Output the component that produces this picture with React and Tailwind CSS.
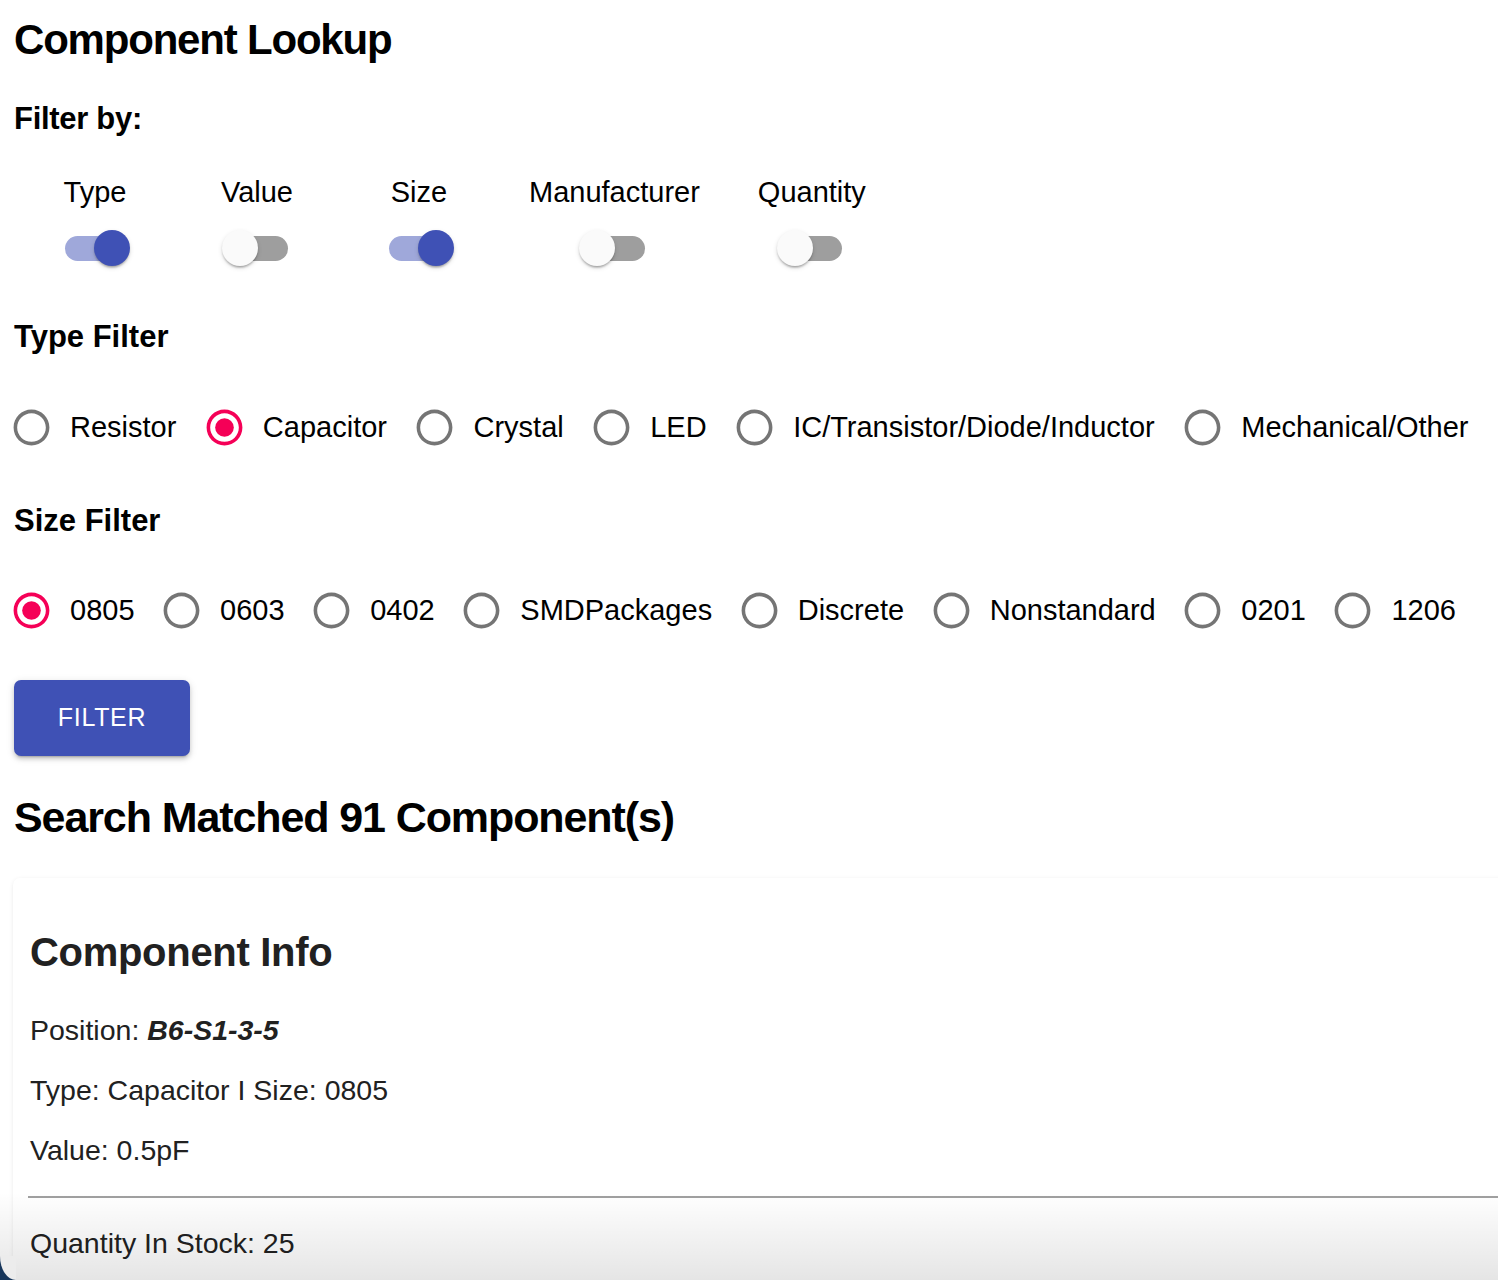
import React from "react";

const toggles = [
  { label: "Type", on: true },
  { label: "Value", on: false },
  { label: "Size", on: true },
  { label: "Manufacturer", on: false },
  { label: "Quantity", on: false },
];

const types = ["Resistor", "Capacitor", "Crystal", "LED", "IC/Transistor/Diode/Inductor", "Mechanical/Other"];
const sizes = ["0805", "0603", "0402", "SMDPackages", "Discrete", "Nonstandard", "0201", "1206"];

function Toggle({ on }) {
  return (
    <div className="relative w-[104px] h-[44px] flex items-center justify-center">
      <div className={on ? "w-[61px] h-[25px] rounded-full bg-[#9fa8da]" : "w-[61px] h-[25px] rounded-full bg-[#9e9e9e]"} />
      <div
        className={
          on
            ? "absolute top-[4px] left-[51px] w-[36px] h-[36px] rounded-full bg-[#3f51b5] shadow-[0_3px_2px_-2px_rgba(0,0,0,0.2),0_2px_2px_0_rgba(0,0,0,0.14),0_2px_5px_0_rgba(0,0,0,0.12)]"
            : "absolute top-[4px] left-[17px] w-[36px] h-[36px] rounded-full bg-[#fafafa] shadow-[0_3px_2px_-2px_rgba(0,0,0,0.2),0_2px_2px_0_rgba(0,0,0,0.14),0_2px_5px_0_rgba(0,0,0,0.12)]"
        }
      />
    </div>
  );
}

function Radio({ label, checked }) {
  return (
    <label className="flex items-center">
      <svg width="43" height="43" viewBox="0 0 24 24" className="shrink-0">
        <path
          fill={checked ? "#f50057" : "#757575"}
          d="M12 2C6.48 2 2 6.48 2 12s4.48 10 10 10 10-4.48 10-10S17.52 2 12 2zm0 18c-4.42 0-8-3.58-8-8s3.58-8 8-8 8 3.58 8 8-3.58 8-8 8z"
        />
        {checked && <circle cx="12" cy="12" r="5.2" fill="#f50057" />}
      </svg>
      <span className="ml-[17px] text-[29px] leading-[50px] whitespace-nowrap">{label}</span>
    </label>
  );
}

export default function App() {
  return (
    <div className="relative h-[1280px] overflow-hidden bg-white text-black font-['Liberation_Sans',Arial,sans-serif]">
      <h1 className="pl-[14px] text-[42px] font-bold leading-[79px] tracking-[-1.2px]">Component Lookup</h1>
      <h2 className="pl-[14px] text-[31px] font-bold leading-[79px] tracking-[-0.3px]">Filter by:</h2>

      {/* switches, label on top */}
      <div className="flex gap-[58px] pl-[43px]">
        {toggles.map((t) => (
          <div key={t.label} className="flex flex-col items-center min-w-[104px]">
            <span className="text-[29px] leading-[68px] whitespace-nowrap">{t.label}</span>
            <Toggle on={t.on} />
          </div>
        ))}
      </div>

      <h2 className="mt-[42px] pl-[14px] text-[31px] font-bold leading-[50px]">Type Filter</h2>
      <div className="mt-[40px] flex gap-[26.5px] pl-[10px]">
        {types.map((t) => (
          <Radio key={t} label={t} checked={t === "Capacitor"} />
        ))}
      </div>

      <h2 className="mt-[44px] pl-[14px] text-[31px] font-bold leading-[50px]">Size Filter</h2>
      <div className="mt-[39px] flex gap-[25.6px] pl-[10px]">
        {sizes.map((s) => (
          <Radio key={s} label={s} checked={s === "0805"} />
        ))}
      </div>

      <button className="mt-[45px] ml-[14px] w-[176px] h-[76px] rounded-[7px] bg-[#3f51b5] text-white text-[25px] tracking-[0.7px] shadow-[0_4px_2px_-3px_rgba(0,0,0,0.2),0_3px_4px_0_rgba(0,0,0,0.14),0_2px_9px_0_rgba(0,0,0,0.12)]">
        FILTER
      </button>

      <h2 className="mt-[31px] pl-[14px] text-[43px] font-bold leading-[60px] tracking-[-1.1px]">
        Search Matched 91 Component(s)
      </h2>

      {/* result card */}
      <div className="mt-[31px] ml-[13px] w-[1520px] rounded-[7px] bg-white pl-[17px] pt-[44px] pb-[60px] shadow-[0_2px_2px_-1px_rgba(0,0,0,0.14),0_1px_4px_0_rgba(0,0,0,0.08)] text-[#212121]">
        <h3 className="text-[40px] font-bold leading-[60px] tracking-[-0.3px]">Component Info</h3>
        <p className="mt-[28px] text-[28.5px] leading-[40px]">
          Position: <span className="font-bold italic">B6-S1-3-5</span>
        </p>
        <p className="mt-[20px] text-[28.5px] leading-[40px]">Type: Capacitor I Size: 0805</p>
        <p className="mt-[20px] text-[28.5px] leading-[40px]">Value: 0.5pF</p>
        <hr className="mt-[26px] -ml-[2px] border-0 h-[2px] bg-[#a0a0a0]" />
        <p className="mt-[25px] text-[28.5px] leading-[40px]">Quantity In Stock: 25</p>
      </div>

      {/* bottom fade and window corner */}
      <div className="pointer-events-none absolute inset-x-0 bottom-0 h-[88px] bg-linear-to-b from-transparent to-[rgba(0,0,0,0.1)]" />
      <div className="absolute bottom-0 left-0 w-[16px] h-[24px] bg-[#16355a]">
        <div className="absolute inset-0 rounded-bl-[16px_24px] bg-[#ececec]" />
      </div>
    </div>
  );
}
